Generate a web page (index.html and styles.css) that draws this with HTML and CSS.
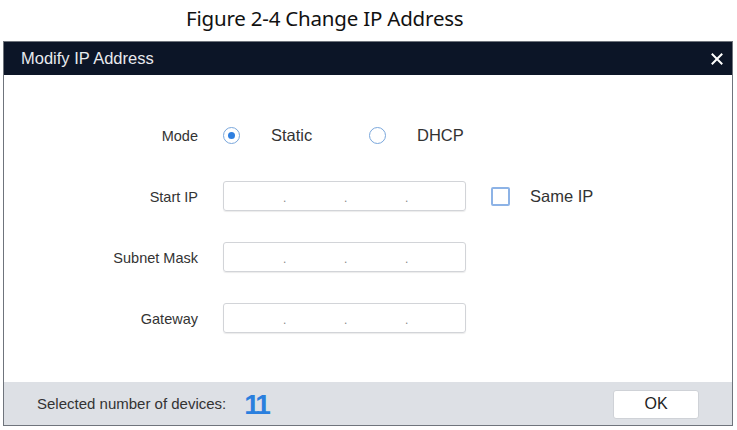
FILE: index.html
```html
<!DOCTYPE html>
<html>
<head>
<meta charset="utf-8">
<link rel="stylesheet" href="styles.css">
</head>
<body>
<div class="page">
  <div class="caption">Figure 2-4 Change IP Address</div>
  <div class="dialog">
    <div class="header">
      <span class="title">Modify IP Address</span>
      <svg class="close" width="12" height="12" viewBox="0 0 12 12"><path d="M1.5 1.5 L10.5 10.5 M10.5 1.5 L1.5 10.5" stroke="#fff" stroke-width="2" stroke-linecap="square"/></svg>
    </div>
    <div class="body">
      <div class="row">
        <div class="label">Mode</div>
        <div class="control">
          <div class="radio-item first"><span class="radio checked"><span class="dot"></span></span><span class="opt">Static</span></div>
          <div class="radio-item"><span class="radio"></span><span class="opt">DHCP</span></div>
        </div>
      </div>
      <div class="row">
        <div class="label">Start IP</div>
        <div class="control">
          <div class="ip"><span class="seg"></span><span class="sep">.</span><span class="seg"></span><span class="sep">.</span><span class="seg"></span><span class="sep">.</span><span class="seg"></span></div>
          <div class="check"><span class="box"></span><span class="opt">Same IP</span></div>
        </div>
      </div>
      <div class="row">
        <div class="label">Subnet Mask</div>
        <div class="control">
          <div class="ip"><span class="seg"></span><span class="sep">.</span><span class="seg"></span><span class="sep">.</span><span class="seg"></span><span class="sep">.</span><span class="seg"></span></div>
        </div>
      </div>
      <div class="row">
        <div class="label">Gateway</div>
        <div class="control">
          <div class="ip"><span class="seg"></span><span class="sep">.</span><span class="seg"></span><span class="sep">.</span><span class="seg"></span><span class="sep">.</span><span class="seg"></span></div>
        </div>
      </div>
    </div>
    <div class="footer">
      <span class="count-label">Selected number of devices:</span>
      <span class="count">11</span>
      <span class="spacer"></span>
      <button class="ok">OK</button>
    </div>
  </div>
</div>
</body>
</html>
```
FILE: styles.css
```css
* { box-sizing: border-box; }
html, body { margin: 0; padding: 0; background: #fff; }
body { font-family: "Liberation Sans", Arial, sans-serif; color: #333; }
.page { width: 737px; height: 430px; padding-left: 3px; }
.caption {
  height: 41px;
  padding-left: 183px;
  padding-top: 4px;
  font-family: "Noto Sans", "Open Sans", sans-serif;
  font-size: 20.5px;
  letter-spacing: -0.2px;
  color: #111;
  line-height: 28px;
}
.dialog {
  width: 730px;
  border: 1px solid #6f747c;
  background: #fff;
}
.header {
  height: 33px;
  background: #0c1527;
  display: flex;
  align-items: center;
  padding-left: 17px;
  padding-right: 9px;
}
.title { color: #e8eaee; font-size: 16.5px; flex: 1; }
.close { display: block; }
.body {
  padding-top: 45px;
  padding-bottom: 49px;
  display: flex;
  flex-direction: column;
  gap: 31px;
}
.row { display: flex; align-items: center; height: 30px; }
.label {
  width: 194px;
  text-align: right;
  font-size: 14.5px;
  color: #333;
  padding-top: 1px;
}
.control { display: flex; align-items: center; margin-left: 25px; }
.radio-item { display: flex; align-items: center; }
.radio-item.first { width: 146px; }
.radio {
  width: 17px; height: 17px;
  border: 1.5px solid #7aa7dc;
  border-radius: 50%;
  display: flex; align-items: center; justify-content: center;
}
.dot { width: 7px; height: 7px; border-radius: 50%; background: #2e7fe0; }
.opt { font-size: 16.5px; color: #333; margin-left: 31px; }
.ip {
  width: 243px; height: 30px;
  border: 1px solid #d2d4d8;
  border-radius: 3px;
  box-shadow: 0 1px 1px rgba(0,0,0,0.08);
  display: flex;
  align-items: flex-end;
  padding-left: 1px;
  padding-bottom: 6px;
  color: #888;
  font-size: 12px;
  line-height: 12px;
}
.seg { width: 58px; }
.seg:last-child { flex: 1; }
.sep { width: 3px; text-align: center; }
.check { display: flex; align-items: center; margin-left: 25px; }
.box {
  width: 19px; height: 19px;
  border: 2px solid #8db3e6;
  border-radius: 2px;
}
.check .opt { margin-left: 20px; }
.footer {
  height: 43px;
  background: #dde0e5;
  display: flex;
  align-items: center;
  padding-left: 33px;
  padding-right: 33px;
}
.count-label { font-size: 15px; color: #333; }
.count {
  font-size: 28px;
  font-weight: bold;
  color: #2a7fde;
  margin-left: 18px;
  letter-spacing: -3px;
  line-height: 28px;
  padding-top: 2px;
}
.spacer { flex: 1; }
.ok {
  width: 86px; height: 29px;
  background: #fff;
  border: 1px solid #cfd2d7;
  border-radius: 3px;
  font-family: "Liberation Sans", Arial, sans-serif;
  font-size: 16px;
  color: #222;
  padding: 0;
  margin-top: 1px;
}
```
